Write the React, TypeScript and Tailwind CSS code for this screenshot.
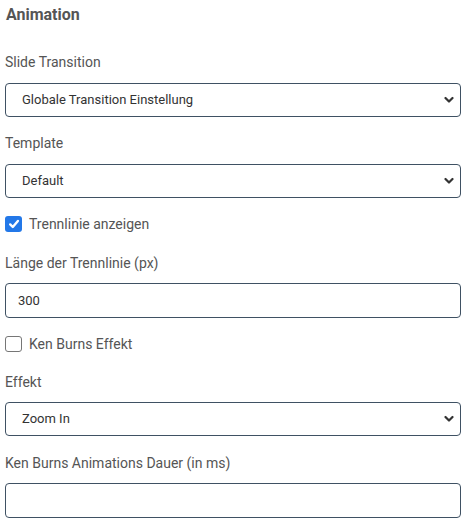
import React from "react";

const font = { fontFamily: "Roboto, 'Liberation Sans', sans-serif" };

function Chevron() {
  return (
    <svg width="10" height="7" viewBox="0 0 10 7" className="absolute right-[6px] top-1/2 -translate-y-1/2">
      <polyline points="1.5,1.5 5,5 8.5,1.5" fill="none" stroke="#333" strokeWidth="2.2" strokeLinecap="round" strokeLinejoin="round" />
    </svg>
  );
}

function Select({ value }: { value: string }) {
  return (
    <div className="relative h-[34px] w-[456px] rounded-[4px] border border-[#3f5163] bg-white flex items-center pl-[16px] text-[13px] text-[#333]">
      {value}
      <Chevron />
    </div>
  );
}

function Input({ value }: { value?: string }) {
  return (
    <div className="h-[35px] w-[456px] rounded-[4px] border border-[#3f5163] bg-white flex items-center pl-[12px] text-[13px] text-[#333]">
      {value}
    </div>
  );
}

function Label({ children }: { children: React.ReactNode }) {
  return <div className="h-5 leading-5 text-[14px] text-[#555]">{children}</div>;
}

function Check({ checked, label }: { checked: boolean; label: string }) {
  return (
    <div className="flex items-center h-5">
      {checked ? (
        <div className="w-[17px] h-[16px] rounded-[3px] bg-[#2378e8] flex items-center justify-center">
          <svg width="12" height="12" viewBox="0 0 12 12">
            <polyline points="2.2,6.4 4.8,9 9.9,3" fill="none" stroke="white" strokeWidth="2.4" strokeLinecap="round" strokeLinejoin="round" />
          </svg>
        </div>
      ) : (
        <div className="w-[17px] h-[16px] rounded-[3px] border border-[#767676] bg-white" />
      )}
      <span className="ml-[7px] text-[14px] text-[#555]">{label}</span>
    </div>
  );
}

export default function App() {
  return (
    <div className="w-[473px] h-[530px] bg-white pl-[5px] pt-[5px]" style={font}>
      <div className="h-5 leading-5 text-[16px] font-bold text-[#555] pl-px">Animation</div>
      <div className="mt-[27px]"><Label>Slide Transition</Label></div>
      <div className="mt-[11px]"><Select value="Globale Transition Einstellung" /></div>
      <div className="mt-[16px]"><Label>Template</Label></div>
      <div className="mt-[11px]"><Select value="Default" /></div>
      <div className="mt-[16px]"><Check checked label="Trennlinie anzeigen" /></div>
      <div className="mt-[19px]"><Label>Länge der Trennlinie (px)</Label></div>
      <div className="mt-[10px]"><Input value="300" /></div>
      <div className="mt-[16px]"><Check checked={false} label="Ken Burns Effekt" /></div>
      <div className="mt-[18px]"><Label>Effekt</Label></div>
      <div className="mt-[10px]"><Select value="Zoom In" /></div>
      <div className="mt-[17px]"><Label>Ken Burns Animations Dauer (in ms)</Label></div>
      <div className="mt-[10px]"><Input /></div>
    </div>
  );
}
